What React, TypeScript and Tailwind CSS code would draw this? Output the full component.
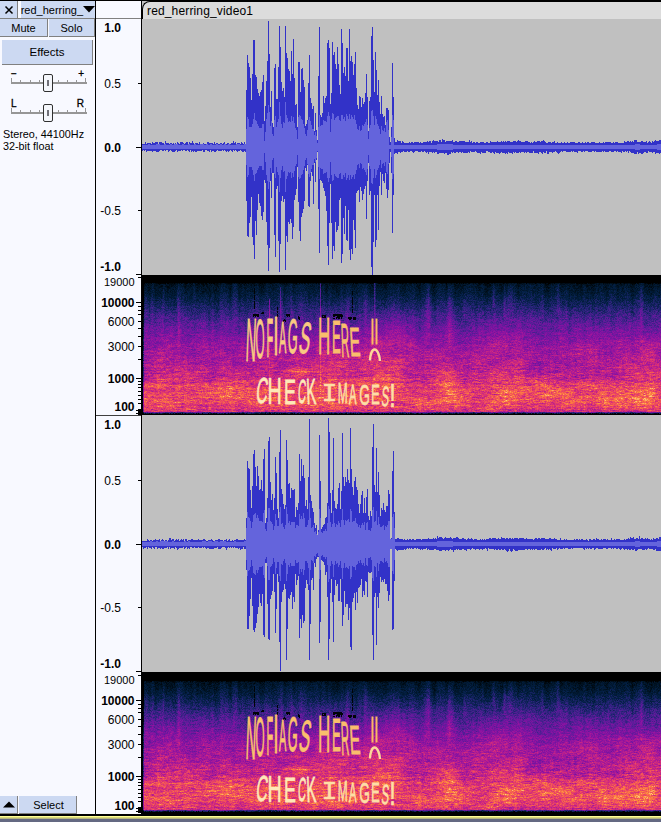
import React from "react";

const OUTER = "#3232c8";
const INNER = "#6464dc";

/* Envelope samples of the loud passage, one per pixel column, in thirds of a pixel */
const TOP_L = [240,135,158,170,204,270,192,90,90,195,200,237,250,258,246,240,216,195,333,288,212,153,33,132,290,243,340,350,174,162,268,268,170,48,110,216,244,235,262,48,129,144,178,183,212,123,192,87,204,286,282,350,156,156,246,178,174,210,232,348,342,330,219,135,264,280,297,288,362,309,360,390,198,51,315,320,310,258,279,264,258,99,90,115,282,248,96,136,126,162,178,111,162,225,252,57,99,190,171,198,114,114,213,57,153,138,156,195,162,126,234,285,297,258,261,291,264,282,276,249,192,261,363,272,261,78,51,150,246,126,180,255,210,276,312,258,312,321,318,345,294,294,300,380,396,350,159,261,384];
const BOT_L = [573,678,681,640,620,561,681,705,747,633,675,600,552,580,588,617,630,606,510,520,636,705,783,714,513,564,488,490,675,741,537,528,693,786,702,573,558,576,568,780,678,696,636,642,627,640,687,652,570,555,537,470,576,663,693,621,610,597,573,474,483,465,588,591,514,486,498,582,460,516,450,426,597,729,510,513,519,534,543,557,603,708,765,639,522,638,747,708,723,636,666,660,648,570,564,759,732,625,672,588,690,693,600,720,750,717,732,630,660,714,549,543,540,576,531,543,570,552,537,528,627,513,459,555,543,771,795,697,555,711,690,555,660,528,487,555,492,513,519,490,537,564,540,460,426,489,669,555,432];
const TOP_R = [318,147,168,171,234,288,222,126,114,165,222,162,192,234,231,204,237,141,111,333,318,258,87,75,210,264,246,294,258,135,183,290,318,120,54,231,246,276,290,280,84,144,216,213,258,228,234,234,231,315,285,294,273,126,207,141,192,159,198,282,264,290,195,21,249,267,288,300,333,348,339,370,354,69,207,350,345,339,336,318,315,273,18,60,243,303,234,78,267,288,290,276,228,213,291,236,63,195,222,195,210,171,204,213,48,171,225,249,207,195,225,234,276,303,276,249,237,303,258,303,255,231,312,324,297,312,105,36,219,240,108,240,180,249,312,288,294,273,294,300,282,282,234,246,381,378,177,117,300];
const BOT_R = [474,651,651,612,561,498,582,654,660,648,633,606,585,546,574,582,546,670,675,453,453,576,681,684,561,549,537,486,540,663,591,486,510,690,777,570,540,534,516,530,744,651,558,561,549,540,591,555,570,486,519,504,492,678,621,648,609,633,627,528,504,516,534,744,636,504,498,534,453,465,440,435,435,693,630,444,446,450,458,489,480,555,744,681,543,501,570,690,549,504,523,516,567,567,501,570,642,609,537,585,576,576,624,588,705,714,570,558,543,594,540,573,528,525,519,501,555,537,549,507,510,555,480,483,483,480,669,744,555,543,699,555,588,543,495,510,504,510,501,516,516,537,567,549,411,411,654,651,507];
const RMS_L = [357,320,327,351,351,351,342,327,309,330,333,342,348,354,354,354,342,342,393,366,327,309,285,306,348,333,372,378,330,318,350,336,327,276,318,342,354,336,340,276,315,324,336,333,336,318,333,321,340,354,360,387,321,315,318,327,330,342,354,372,378,360,330,321,333,345,357,357,376,366,378,400,350,315,348,345,345,330,333,333,336,318,306,318,366,327,309,312,330,324,321,318,318,330,333,315,315,327,321,333,312,318,327,312,327,315,321,327,315,330,342,357,360,348,363,360,345,348,342,336,327,345,387,354,345,303,300,318,345,318,327,342,348,357,372,348,360,363,354,366,336,330,360,405,405,380,315,330,405];

function hash(x: number, y: number, s: number) {
  let h = Math.imul(x + 1013, 374761393) ^ Math.imul(y + 577, 668265263) ^ Math.imul(s + 31, 1274126177);
  h = Math.imul(h ^ (h >>> 13), 1103515245);
  h ^= h >>> 16;
  h = Math.imul(h, 2246822519);
  return ((h ^ (h >>> 15)) >>> 0) / 4294967296;
}

/* Value noise, bilinear between lattice points */
function smooth(x: number, y: number, s: number) {
  const xi = Math.floor(x), yi = Math.floor(y);
  let u = x - xi, v = y - yi;
  u = u * u * (3 - 2 * u);
  v = v * v * (3 - 2 * v);
  const a = hash(xi, yi, s) * (1 - u) + hash(xi + 1, yi, s) * u;
  const b = hash(xi, yi + 1, s) * (1 - u) + hash(xi + 1, yi + 1, s) * u;
  return a * (1 - v) + b * v;
}

const START = 104;

/* Places where the background hum swells: column, half width, extra pixels */
const SWELLS = [[302, 14, 2], [366, 22, 1.4], [322, 8, 0.8], [400, 12, 0.8], [495, 10, 1.6], [517, 6, 1.8], [256, 5, 1]];

function Waveform({ top, bottom, rms, mid, center, height, seed }: {
  top: number[]; bottom: number[]; rms?: number[]; mid: number; center: number; height: number; seed: number;
}) {
  let outer = "";
  let inner = "";
  for (let x = 0; x < 519; x++) {
    const i = x - START;
    let up: number, down: number, r0: number, r1: number;
    if (i >= 0 && i < top.length) {
      up = (mid - top[i]) / 3;
      down = (bottom[i] - mid) / 3;
      const avg = (up + down) / 2;
      let r = rms ? (mid - rms[i]) / 3 : 7 + avg * 0.27 + (hash(i, 2, seed) - 0.5) * 5;
      r = Math.min(r, up, down);
      r0 = Math.round(center - r);
      r1 = Math.round(center + r);
    } else {
      const late = x > START;
      let swell = 0;
      for (const [c, w, s] of SWELLS) swell += s * Math.exp(-(((x - c) / w) ** 2));
      const base = late ? 3.7 + swell : 3.2;
      up = base + hash(x, 1, seed) * 1.9 - 0.3;
      down = base + hash(x, 3, seed) * 1.9 - 0.1;
      if (hash(x, 5, seed) > 0.88) up += 1;
      if (hash(x, 6, seed) > 0.9) down += 1;
      const r = swell > 1.5 ? 3 : 2;
      r0 = center - r + (late ? 0 : -(hash(x >> 1, 7, seed) > 0.6 ? 1 : 0));
      r1 = center + r;
    }
    const y0 = Math.max(0, Math.round(center - up)), y1 = Math.min(height, Math.round(center + down));
    outer += `M${x} ${y0}h1V${y1}h-1z`;
    inner += `M${x} ${r0}h1V${r1}h-1z`;
  }
  return (
    <svg width="519" height={height} viewBox={`0 0 519 ${height}`} shapeRendering="crispEdges" className="block shrink-0 bg-[#c0c0c0]">
      <path d={outer} fill={OUTER} />
      <path d={inner} fill={INNER} />
    </svg>
  );
}

/* Colour map of the spectrogram, quiet to loud */
const STOPS: [number, number[]][] = [
  [0, [0, 0, 0]],
  [0.1, [0, 18, 34]],
  [0.2, [3, 32, 70]],
  [0.3, [40, 36, 122]],
  [0.4, [92, 28, 154]],
  [0.5, [134, 18, 162]],
  [0.6, [172, 26, 150]],
  [0.7, [212, 44, 122]],
  [0.8, [240, 78, 92]],
  [0.9, [253, 132, 60]],
  [1, [255, 205, 130]],
];
const LEVELS = 48;

function shade(v: number) {
  for (let i = 1; i < STOPS.length; i++) {
    if (v <= STOPS[i][0]) {
      const [p, a] = STOPS[i - 1];
      const [q, b] = STOPS[i];
      const t = (v - p) / (q - p);
      return `rgb(${a.map((c, k) => Math.round(c + (b[k] - c) * t)).join(",")})`;
    }
  }
  return "rgb(255,205,130)";
}

/* Mean level by row below the silent band */
const PROFILE: [number, number][] = [
  [0, 0.1], [10, 0.16], [20, 0.24], [30, 0.32], [42, 0.41], [54, 0.49], [66, 0.55],
  [80, 0.6], [93, 0.65], [103, 0.74], [111, 0.78], [117, 0.79], [124, 0.74], [128, 0.7], [129, 0.36], [134, 0.22],
];
function profile(y: number) {
  for (let i = 1; i < PROFILE.length; i++) {
    if (y <= PROFILE[i][0]) {
      const [p, a] = PROFILE[i - 1];
      const [q, b] = PROFILE[i];
      return a + ((b - a) * (y - p)) / (q - p);
    }
  }
  return 0.2;
}

/* Bright vertical streaks: column, reach, half width, strength */
const STREAKS = [
  [20, 60, 1, 0.07], [35, 66, 1.5, 0.09], [92, 45, 2, 0.05], [138, 45, 2, 0.08], [148, 45, 1, 0.08],
  [158, 40, 2, 0.08], [204, 50, 2, 0.1], [222, 50, 2, 0.12], [251, 50, 3, 0.07], [285, 58, 2.5, 0.12], [306, 65, 2, 0.12],
  [321, 34, 1.5, 0.11], [350, 25, 1.5, 0.13], [361, 34, 1.5, 0.16], [366, 42, 3, 0.12], [399, 35, 1.5, 0.1], [415, 32, 2, 0.11],
  [467, 28, 2, 0.08], [498, 60, 1.5, 0.08], [512, 36, 1.5, 0.06],
];
/* Warm clouds: column, row, half width, half height, strength */
const CLOUDS = [
  [190, 86, 75, 22, 0.08], [245, 55, 25, 18, 0.07], [243, 92, 20, 12, 0.06], [305, 95, 10, 20, 0.08], [366, 93, 14, 18, 0.08],
  [400, 98, 10, 12, 0.06], [448, 72, 14, 12, 0.05], [485, 75, 8, 20, 0.05], [505, 72, 10, 18, 0.09], [356, 60, 20, 15, 0.05],
  [60, 103, 40, 6, 0.03], [500, 112, 20, 14, 0.06], [427, 90, 15, 12, -0.05], [395, 84, 12, 8, -0.05], [90, 70, 18, 25, -0.03],
];
/* Clicks that run through the left channel only: column, first row, last row, strength */
const CLICKS = [[126, 16, 100, 0.22], [137, 4, 60, 0.14], [177, 0, 112, 0.24], [231, 0, 60, 0.2], [232, 0, 40, 0.1]];
const HOLES = [[110, 31, 6, 3], [118, 29, 3, 2], [143, 31, 4, 3], [155, 33, 2, 4], [179, 32, 4, 3], [190, 31, 10, 5], [205, 34, 8, 3], [111, 2, 1, 25], [134, 24, 1, 10], [209, 8, 1, 22], [140, 36, 3, 3]];

function buildSpectrum(clicks: boolean) {
  const out: string[] = Array(LEVELS).fill("");
  for (let y = 0; y < 131; y++) {
    let run = -1;
    let from = 0;
    for (let x = 0; x <= 518; x++) {
      let bin = -2;
      if (x < 518) {
        let v = profile(y);
        const low = Math.min(1, y / 95);
        v += (hash(x, y, clicks ? 1 : 21) - 0.5) * (0.1 + low * 0.04);
        v += (smooth(x / 3, y, 2) - 0.5) * 0.16 * low;
        v += (smooth(x / 16, y / 1.5, 6) - 0.5) * 0.12 * low * low;
        v += (smooth(x / 14, y / 10, 3) - 0.5) * 0.1 * low * (y < 128 ? 1 : 0);
        v += (smooth(x / 3, y / 45, 4) - 0.5) * 0.09 * (1 - low * 0.6);
        for (const [c, reach, w, s] of STREAKS) {
          const d = Math.abs(x - c) / w;
          if (d < 2 && y < reach) v += s * Math.exp(-d * d) * (1 - (y / reach) * 0.45) * (0.4 + Math.min(1, y / 18) * 0.6);
        }
        if (y < 128) {
          for (const [cx, cy, w, h, s] of CLOUDS) v += s * Math.exp(-(((x - cx) / w) ** 2) - ((y - cy) / h) ** 2);
        }
        if (clicks) {
          for (const [c, a, b, s] of CLICKS) {
            if (x === c && y >= a && y < b) v += s * (1 - ((y - a) / (b - a)) * 0.8);
          }
        }
        if (x > 139 && x < 167) v += 0.13 * Math.exp(-(((y - 88) / 1.3) ** 2));
        for (const [hx, hy, hw, hh] of HOLES) {
          if (x >= hx && x < hx + hw && y >= hy && y < hy + hh && hash(x, y, 7) < 0.75) v = 0.02;
        }
        if (y === 0) v -= 0.08 * hash(x, 0, 11);
        if (y > 129) v = hash(x, y, 12) * 0.28;
        if (x === 0) v -= 0.25;
        bin = Math.max(0, Math.min(LEVELS - 1, Math.round(v * (LEVELS - 1))));
      }
      if (bin !== run) {
        if (run >= 0) out[run] += `M${from + 1} ${y + 8}h${x - from}v1h${from - x}z`;
        run = bin;
        from = x;
      }
    }
  }
  return out;
}
const LEFT = buildSpectrum(true);
const RIGHT = buildSpectrum(false);

/* Ink extents of the capitals in 2048 units per em: left, right */
const INK: Record<string, [number, number]> = {
  A: [0, 1366], C: [102, 1398], E: [168, 1256], F: [168, 1160], G: [109, 1458], H: [168, 1311], K: [168, 1350],
  M: [168, 1537], N: [168, 1311], O: [99, 1501], R: [168, 1440], S: [92, 1270], l: [135, 320], "!": [190, 390], I: [188, 1040],
};

/* Letter, left, right, top, bottom, slant in degrees */
type Mark = [string, number, number, number, number, number];
const LINE_ONE: Mark[] = [
  ["N", 104.5, 112.5, 44, 86, -2], ["O", 114, 122, 45, 83, 0], ["F", 125.5, 130.8, 43.5, 82, 0], ["l", 133, 134.8, 42, 80, 0],
  ["A", 137, 144.3, 48, 78, 0], ["G", 146, 154.500, 44.5, 78, -2], ["S", 156.5, 166, 48, 78, -8],
];
const LINE_TWO: Mark[] = [
  ["H", 177.5, 187, 43, 79, 0], ["E", 191, 198, 46, 78, 0], ["R", 200.5, 207.5, 49, 82, 2], ["E", 209.5, 218, 53, 81, 3],
];
const LINE_THREE: Mark[] = [
  ["C", 114, 124, 103, 128, -6], ["H", 127, 138, 104, 129, 0], ["E", 143.5, 153, 105.500, 129, 0], ["C", 156, 163, 105, 128, -3], ["K", 166, 174.500, 104, 129, 2],
];
const LINE_FOUR: Mark[] = [
  ["I", 182, 193, 109, 126, 0], ["M", 196.8, 204.8, 108, 128, 0], ["A", 207, 214.500, 110, 129, 0], ["G", 218, 227, 110, 130, 0],
  ["E", 230, 237, 110, 129, 0], ["S", 239.5, 246, 112, 131, -4], ["!", 249.500, 251.800, 109, 132, 0],
];

function Marks({ marks, ink, weight }: { marks: Mark[]; ink: string; weight: number }) {
  return (
    <g fill={ink} stroke={ink} strokeWidth={weight}>
      {marks.map(([ch, l, r, t, b, slant], i) => {
        const [a, z] = INK[ch];
        const cap = ch === "I" ? 1349 : ch === "l" ? 1484 : 1409;
        const sx = ((r - l) / (z - a)) * 20.48;
        const sy = ((b - t) / cap) * 20.48;
        return (
          <text
            key={i}
            fontSize="100"
            vectorEffect="non-scaling-stroke"
            className={ch === "I" ? "[font-family:'Liberation_Mono',monospace]" : "[font-family:'Liberation_Sans',Arial,sans-serif]"}
            transform={`translate(${l} ${b}) skewX(${slant}) scale(${sx} ${sy}) translate(${-a / 20.48} 0)`}
          >
            {ch}
          </text>
        );
      })}
    </g>
  );
}

function Spectrogram({ height, shift, cells, top }: { height: number; shift: number; cells: string[]; top: string }) {
  return (
    <svg width="519" height={height} viewBox={`0 ${-shift} 519 ${height}`} className="block shrink-0 bg-black">
      <g shapeRendering="crispEdges">
        {cells.map((d, i) => (d ? <path key={i} d={d} fill={shade(i / (LEVELS - 1))} /> : null))}
      </g>
      <Marks marks={LINE_ONE} ink={top} weight={0.7} />
      <Marks marks={LINE_TWO} ink="#f9be6c" weight={0.7} />
      <g fill="none" stroke="#fbb765" strokeWidth="2">
        <path d="M230.500 43.500v26M234.500 43.500v26" />
        <path d="M228 85.500C228 80 230 74.500 232.500 74.500C235 74.500 237.500 79 238 86" stroke="#fbd79a" strokeWidth="2.400" />
      </g>
      <Marks marks={LINE_THREE} ink="#fde8b8" weight={0.6} />
      <Marks marks={LINE_FOUR} ink="#fddfa6" weight={0.6} />
    </svg>
  );
}

const FREQ: [string, number, boolean][] = [
  ["19000", 7, false], ["10000", 28, true], ["6000", 47, false], ["3000", 72, false], ["1000", 104, true], ["100", 132, true],
];

function Ticks({ ys, long }: { ys: number[]; long: number[] }) {
  return (
    <g fill="#000">
      {ys.map((y) => <rect key={y} x="42" y={y} width="3" height="1" />)}
      {long.map((y) => <rect key={"l" + y} x="40" y={y} width="5" height="1" />)}
    </g>
  );
}

function Ruler({ shift }: { shift: number }) {
  const labels: [string, number, boolean][] = [
    ["1.0", 8, true], ["0.5", 64, false], ["0.0", 128, true], ["-0.5", 191, false], ["-1.0", 247, true],
  ];
  return (
    <>
      <svg width="45" height="256" className="block shrink-0 [font-family:'Liberation_Sans',Arial,sans-serif]" fontSize="12">
        <Ticks ys={[64, 191]} long={[128, 255]} />
        {labels.map(([t, y, b]) => (
          <text key={t} x="25" y={y + 4.5} textAnchor="end" fontWeight={b ? 700 : 400}>{t}</text>
        ))}
      </svg>
      <svg width="45" height="141" viewBox={`0 ${-shift} 45 141`} className="block shrink-0 [font-family:'Liberation_Sans',Arial,sans-serif]" fontSize="12">
        <Ticks ys={[2, 31, 35, 39, 46, 53, 61, 71, 84, 106, 109, 112, 116, 120, 124, 128]} long={[27, 103]} />
        <rect x="42" y="134" width="3" height="6" />
        <rect x="40" y="135" width="2" height="1" />
        <rect x="40" y="138" width="2" height="1" />
        {FREQ.map(([t, y, b]) => (
          <text key={t} x="38.5" y={y + 4 + (t === "100" ? shift : 0)} textAnchor="end" fontWeight={b ? 700 : 400} fontSize={t === "19000" ? 11 : 12}>{t}</text>
        ))}
      </svg>
    </>
  );
}

function Slider({ left, right }: { left: string; right: string }) {
  return (
    <div className="relative mx-[10px] h-[30px] w-[78px]">
      <div className="flex h-3 justify-between pl-px pr-1 text-[10px] leading-3 [-webkit-text-stroke:0.3px_#000]">
        <span>{left}</span>
        <span>{right}</span>
      </div>
      <svg width="78" height="18" shapeRendering="crispEdges" className="absolute left-0 top-[6px]">
        <path d="M1.5 4v6M10.5 6v4M20.5 6v4M29.5 6v4M38.5 4v4M48.5 6v4M57.5 6v4M66.5 6v4M75.5 4v6" stroke="#969696" />
        <rect x="1" y="8" width="76" height="2" fill="#969696" />
        <rect x="33.5" y="0.5" width="9" height="17" rx="1.5" fill="#f4f6fb" stroke="#303030" shapeRendering="auto" />
        <rect x="37" y="6" width="2" height="6" fill="#707078" />
      </svg>
    </div>
  );
}

function Button({ className, children }: { className: string; children: React.ReactNode }) {
  return (
    <button className={"flex items-center justify-center border-b border-r border-[#808080] bg-[#ccd9f2] " + className}>{children}</button>
  );
}

export default function App() {
  return (
    <div className="flex h-[822px] w-[661px] flex-col overflow-hidden bg-[#f8f9ff] text-[11px] leading-3 text-black [font-family:'Liberation_Sans',Arial,sans-serif]">
      <div className="h-px shrink-0 bg-black" />
      <div className="flex h-[813px] shrink-0">
        <aside className="flex w-[95px] shrink-0 flex-col">
          <div className="flex h-[18px] border-b border-[#808080]">
            <Button className="w-[18px] border-b-0 pl-0.5">
              <svg width="10" height="10" viewBox="0 0 10 10"><path d="M1.500 1.500l7 7M8.500 1.500l-7 7" stroke="#000" strokeWidth="1.500" /></svg>
            </Button>
            <Button className="ml-[3px] flex-1 gap-0 border-b-0 border-r-0">
              <span>red_herring_</span>
              <svg width="12" height="7" className="shrink-0"><path d="M0 0h12L6 6.500z" /></svg>
            </Button>
          </div>
          <div className="flex h-[18px]">
            <Button className="w-12">Mute</Button>
            <Button className="ml-px flex-1">Solo</Button>
          </div>
          <Button className="ml-[2px] mt-[3px] h-[25px] w-[91px] text-[11.500px]">Effects</Button>
          <div className="mt-[3px]"><Slider left="−" right="+" /></div>
          <Slider left="L" right="R" />
          <div className="ml-[3px] mt-0 whitespace-nowrap text-[10.800px]">
            <div>Stereo, 44100Hz</div>
            <div>32-bit float</div>
          </div>
          <div className="mt-auto flex h-[18px]">
            <Button className="w-[18px] pl-px"><svg width="12" height="7"><path d="M6 0.500L12 6.500H0z" /></svg></Button>
            <Button className="ml-px w-[58px] pl-0.5">Select</Button>
          </div>
        </aside>
        <div className="w-px shrink-0 bg-black" />
        <div className="flex w-[45px] shrink-0 flex-col">
          <div className="h-[18px] shrink-0 border-b border-[#808080]" />
          <Ruler shift={0} />
          <div className="-mt-px h-px shrink-0 bg-[#404040]" />
          <Ruler shift={1} />
        </div>
        <div className="flex w-[520px] shrink-0 flex-col border-l border-black bg-[#c0c0c0]">
          <div className="flex h-[18px] shrink-0 items-center rounded-tl-lg border-l border-t border-black bg-[#dcdcdc] pl-1 pt-px text-[12px] tracking-[0.15px]">red_herring_video1</div>
          <Waveform top={TOP_L} bottom={BOT_L} rms={RMS_L} mid={411} center={128} height={256} seed={1} />
          <Spectrogram height={140} shift={0} cells={LEFT} top="#f9c981" />
          <div className="h-px shrink-0 bg-[#c0c0c0]" />
          <Waveform top={TOP_R} bottom={BOT_R} mid={396} center={128} height={256} seed={2} />
          <Spectrogram height={142} shift={1} cells={RIGHT} top="#fbc06d" />
        </div>
      </div>
      <div className="h-0.5 shrink-0 bg-black" />
      <div className="h-px shrink-0 bg-[#ffff96]" />
      <div className="h-px shrink-0 bg-[#d8d878]" />
      <div className="h-px shrink-0 bg-[#b4b482]" />
      <div className="flex-1 bg-[#646982]" />
    </div>
  );
}
